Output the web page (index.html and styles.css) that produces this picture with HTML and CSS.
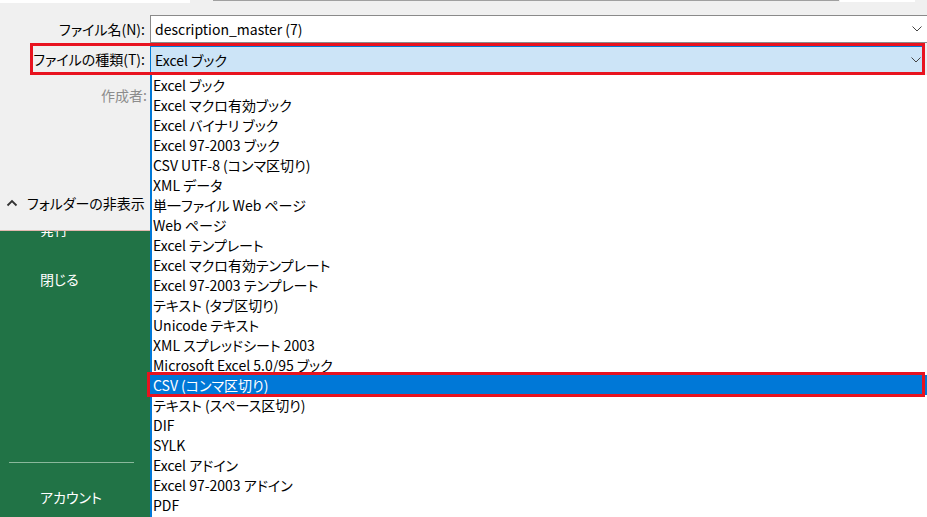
FILE: index.html
```html
<!DOCTYPE html>
<html lang="ja">
<head>
<meta charset="utf-8">
<title>名前を付けて保存</title>
<link rel="stylesheet" href="styles.css">
</head>
<body>
<div class="app">
  <div class="topstrip">
    <span class="ts-white"></span>
    <span class="ts-gap"></span>
    <span class="ts-line"></span>
    <span class="ts-white2"></span>
  </div>

  <div class="name-row">
    <label class="lbl">ファイル名(N):</label>
    <div class="field">
      <span class="field-text">description_master (7)</span>
      <svg class="chev" width="10" height="6" viewBox="0 0 10 6"><polyline points="0.5,0.5 5,5 9.5,0.5" fill="none" stroke="#444" stroke-width="1"/></svg>
    </div>
  </div>

  <div class="type-box">
    <label class="lbl type-lbl">ファイルの種類(T):</label>
    <div class="combo">
      <span class="field-text">Excel ブック</span>
      <svg class="chev" width="10" height="6" viewBox="0 0 10 6"><polyline points="0.5,0.5 5,5 9.5,0.5" fill="none" stroke="#444" stroke-width="1"/></svg>
    </div>
  </div>

  <div class="lower">
    <aside class="side">
      <div class="side-gray">
        <div class="author">作成者:</div>
        <div class="folder-toggle">
          <svg width="12" height="8" viewBox="0 0 12 8"><polyline points="1.5,6.5 6,2 10.5,6.5" fill="none" stroke="#333" stroke-width="1.8"/></svg>
          <span>フォルダーの非表示</span>
        </div>
      </div>
      <nav class="side-green">
        <div class="nav-item nav-cut">発行</div>
        <div class="nav-item">閉じる</div>
        <div class="nav-sep"></div>
        <div class="nav-item nav-account">アカウント</div>
      </nav>
    </aside>

    <ul class="list">
      <li>Excel ブック</li>
      <li>Excel マクロ有効ブック</li>
      <li>Excel バイナリ ブック</li>
      <li>Excel 97-2003 ブック</li>
      <li>CSV UTF-8 (コンマ区切り)</li>
      <li>XML データ</li>
      <li>単一ファイル Web ページ</li>
      <li>Web ページ</li>
      <li>Excel テンプレート</li>
      <li>Excel マクロ有効テンプレート</li>
      <li>Excel 97-2003 テンプレート</li>
      <li>テキスト (タブ区切り)</li>
      <li>Unicode テキスト</li>
      <li>XML スプレッドシート 2003</li>
      <li>Microsoft Excel 5.0/95 ブック</li>
      <li class="selected">CSV (コンマ区切り)</li>
      <li>テキスト (スペース区切り)</li>
      <li>DIF</li>
      <li>SYLK</li>
      <li>Excel アドイン</li>
      <li>Excel 97-2003 アドイン</li>
      <li>PDF</li>
    </ul>
  </div>
</div>
</body>
</html>
```

FILE: styles.css
```css
* { box-sizing: border-box; }

html, body {
  margin: 0;
  padding: 0;
}

body {
  width: 927px;
  height: 517px;
  overflow: hidden;
  background: #f0f0f0;
  font-family: "Noto Sans CJK JP", "Noto Sans", sans-serif;
  font-size: 14px;
  font-feature-settings: "palt";
  color: #000;
}

.app {
  display: flex;
  flex-direction: column;
  height: 517px;
}

/* top strip */
.topstrip {
  height: 15px;
  display: flex;
  align-items: flex-start;
}
.ts-white {
  width: 190px;
  height: 3px;
  background: #fff;
}
.ts-gap { width: 23px; }
.ts-line {
  width: 626px;
  height: 1px;
  background: #a0a0a0;
}
.ts-white2 {
  width: 75px;
  height: 2px;
  margin-left: 1px;
  background: #fff;
}

/* labels */
.lbl {
  flex: none;
  text-align: right;
  padding-right: 5px;
  white-space: nowrap;
}

/* name row */
.name-row {
  display: flex;
  height: 28px;
  align-items: stretch;
}
.name-row .lbl {
  width: 150px;
  line-height: 28px;
}
.field {
  flex: 1;
  display: flex;
  align-items: center;
  background: #fff;
  border-top: 1px solid #8a8a8a;
  border-bottom: 1px solid #8a8a8a;
  border-left: 1px solid #8a8a8a;
  padding-left: 4px;
  padding-right: 5px;
}
.field-text {
  flex: 1;
  white-space: nowrap;
}
.chev { flex: none; }

/* type row with red box */
.type-box {
  display: flex;
  height: 32px;
  margin-left: 30px;
  margin-right: 2px;
  border: 3px solid #e8131f;
}
.type-lbl {
  width: 117px;
  line-height: 26px;
}
.combo {
  flex: 1;
  display: flex;
  align-items: center;
  background: #cce4f7;
  border-top: 1px solid #0078d7;
  border-left: 1px solid #0078d7;
  padding-left: 4px;
  padding-right: 1px;
}

/* lower area */
.lower {
  flex: 1;
  display: flex;
  min-height: 0;
}

.side {
  width: 150px;
  flex: none;
  display: flex;
  flex-direction: column;
}

.side-gray {
  height: 156px;
  flex: none;
  display: flex;
  flex-direction: column;
  padding-top: 10px;
  padding-bottom: 17px;
  border-bottom: 1px solid #e2b8b0;
}
.author {
  line-height: 20px;
  text-align: right;
  padding-right: 3px;
  color: #8c8c8c;
}
.folder-toggle {
  margin-top: auto;
  display: flex;
  align-items: center;
  gap: 9px;
  padding-left: 6px;
  line-height: 20px;
  white-space: nowrap;
}
.folder-toggle svg { flex: none; }

.side-green {
  flex: 1;
  background: #217346;
  color: #fff;
  display: flex;
  flex-direction: column;
  overflow: hidden;
  padding-bottom: 10px;
}
.nav-item {
  line-height: 20px;
  padding-left: 40px;
  white-space: nowrap;
}
.nav-cut {
  margin-top: -12px;
  margin-bottom: 30px;
}
.nav-sep {
  margin-top: auto;
  margin-left: 9px;
  width: 125px;
  height: 1px;
  background: #8ab89c;
}
.nav-account {
  margin-top: 24px;
}

/* list */
.list {
  flex: 1;
  margin: 0;
  padding: 0;
  list-style: none;
  background: #fff;
  border-left: 2px solid #0078d7;
}
.list li {
  height: 20px;
  line-height: 20px;
  padding-left: 1px;
  white-space: nowrap;
}
.list li.selected {
  position: relative;
  background: #0078d7;
  color: #fff;
}
.list li.selected::after {
  content: "";
  position: absolute;
  top: -3px;
  bottom: -2px;
  left: -5px;
  right: 2px;
  border: 3px solid #e8131f;
}
```
